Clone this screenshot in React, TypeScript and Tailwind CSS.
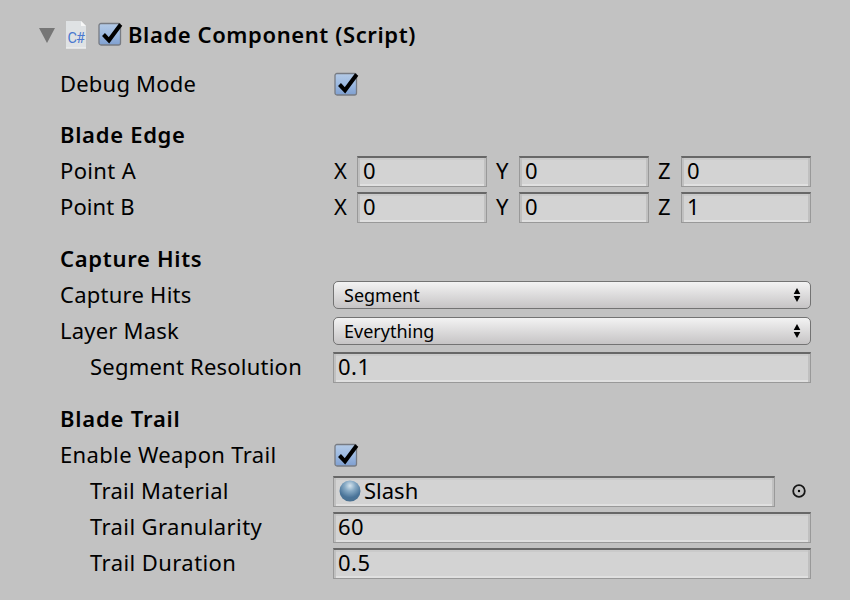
import type { ReactNode } from "react";

function Field({ children, className = "" }: { children?: ReactNode; className?: string }) {
  return (
    <div
      className={`flex h-[31px] items-center border border-t-2 border-[#999] border-t-[#676767] bg-[#d3d3d3] text-[22px] leading-[30px] shadow-[inset_2px_0_0_#c0c0c0,inset_-2px_0_0_#c0c0c0,inset_0_2px_0_#cacaca,inset_0_-2px_0_#e0e0e0] ${className}`}
    >
      {children}
    </div>
  );
}

function Check() {
  return (
    <svg width="26" height="25" viewBox="0 0 26 25" className="shrink-0">
      <defs>
        <linearGradient id="box" x1="0" y1="0" x2="0" y2="1">
          <stop offset="0" stopColor="#b4cae6" />
          <stop offset="0.5" stopColor="#9dbae1" />
          <stop offset="1" stopColor="#7f9fd0" />
        </linearGradient>
      </defs>
      <rect x="1" y="1.5" width="21.5" height="21.5" rx="2" fill="url(#box)" stroke="#777b83" strokeWidth="1.3" />
      <path d="M5.5 12.5L11 18.3L22.7 2.5" fill="none" stroke="#000" strokeWidth="4" />
    </svg>
  );
}

function Row({ label, spacing, indent, children }: { label: string; spacing: string; indent?: boolean; children: ReactNode }) {
  return (
    <div className="flex h-9 items-center">
      <div className={`h-9 w-[273px] shrink-0 text-[22px] leading-[34px] whitespace-nowrap ${indent ? "pl-[30px]" : ""} ${spacing}`}>
        {label}
      </div>
      {children}
    </div>
  );
}

function Heading({ children, spacing }: { children: string; spacing: string }) {
  return <h2 className={`h-9 text-[22px] leading-[34px] font-semibold ${spacing}`}>{children}</h2>;
}

function Popup({ children }: { children: string }) {
  return (
    <div className="flex h-7 w-[478px] items-center justify-between rounded-[5px] border-[1.5px] border-[#737373] bg-linear-to-b from-[#f3f3f3] to-[#c6c4c5] pr-[9px] pl-[10px]">
      <span className="text-[18px] leading-6">{children}</span>
      <svg width="8" height="14" viewBox="0 0 8 14">
        <path d="M4 0L7.3 6H0.7ZM0.7 8H7.3L4 14Z" fill="#000" />
      </svg>
    </div>
  );
}

function Vector({ values }: { values: string[] }) {
  return (
    <div className="flex gap-2">
      {["X", "Y", "Z"].map((axis, i) => (
        <div key={axis} className="flex items-center">
          <span className="h-[31px] w-[24px] pl-px text-[22px] leading-[29px]">{axis}</span>
          <Field className="w-[130px] pl-[5px]"><span className="-mt-[3px]">{values[i]}</span></Field>
        </div>
      ))}
    </div>
  );
}

function Value({ children }: { children: string }) {
  return <Field className="w-[478px] pl-1"><span className="-mt-[3px] tracking-[0.5px]">{children}</span></Field>;
}

export default function App() {
  return (
    <div className="h-[600px] w-[850px] overflow-hidden bg-[#c2c2c2] font-['Noto_Sans',sans-serif] text-black">
      <header className="flex h-[66px] items-start pt-[17px] pl-[39px]">
        <svg width="16" height="36" viewBox="0 0 16 36" className="shrink-0">
          <path d="M0 11H16L8 26Z" fill="#767676" />
        </svg>
        <svg width="21" height="36" viewBox="0 0 21 36" className="ml-[11px] shrink-0">
          <path d="M0 4H15L20 9V31.5H0Z" fill="#dfe2e4" />
          <path d="M15 4V9H20Z" fill="#f7f7f7" />
          <path d="M0 31H20" stroke="#f4f4f4" />
          <text x="1.5" y="26" fontSize="14.5" fill="#4a78cf" textLength="17.5" fontFamily="Roboto, sans-serif">C#</text>
        </svg>
        <div className="ml-[11px] pt-[5px]"><Check /></div>
        <h1 className="ml-[4px] text-[22px] leading-[34px] font-semibold tracking-[0.6px] whitespace-nowrap">Blade Component (Script)</h1>
      </header>
      <main className="pl-[60px]">
        <Row label="Debug Mode" spacing="tracking-[0.2px]"><div className="pl-[1px]"><Check /></div></Row>
        <section className="pt-[15px]">
          <Heading spacing="tracking-[0.7px]">Blade Edge</Heading>
          <Row label="Point A" spacing="tracking-[0.35px]"><Vector values={["0", "0", "0"]} /></Row>
          <Row label="Point B" spacing="tracking-[0.1px]"><Vector values={["0", "0", "1"]} /></Row>
        </section>
        <section className="pt-4">
          <Heading spacing="tracking-[0.7px]">Capture Hits</Heading>
          <Row label="Capture Hits" spacing="tracking-[0.25px]"><Popup>Segment</Popup></Row>
          <Row label="Layer Mask" spacing="tracking-[0.2px]"><Popup>Everything</Popup></Row>
          <Row label="Segment Resolution" indent spacing="tracking-[0.22px]"><Value>0.1</Value></Row>
        </section>
        <section className="pt-4">
          <Heading spacing="tracking-[0.8px]">Blade Trail</Heading>
          <Row label="Enable Weapon Trail" spacing="tracking-[0.35px]"><div className="pl-[1px]"><Check /></div></Row>
          <Row label="Trail Material" indent spacing="tracking-[0.3px]">
            <Field className="w-[442px] pl-[5px]">
              <svg width="22" height="22" viewBox="0 0 22 22" className="mr-[3px] -mt-px">
                <defs>
                  <radialGradient id="orb" cx="0.5" cy="0.25" r="0.75">
                    <stop offset="0" stopColor="#d5e4ee" />
                    <stop offset="0.35" stopColor="#86a9c4" />
                    <stop offset="0.75" stopColor="#4a7499" />
                    <stop offset="1" stopColor="#4a7090" />
                  </radialGradient>
                </defs>
                <circle cx="11" cy="11" r="10.5" fill="url(#orb)" />
              </svg>
              <span className="-mt-[3px]">Slash</span>
            </Field>
            <svg width="14" height="14" viewBox="0 0 14 14" className="ml-[17px]">
              <circle cx="7" cy="7" r="5.8" fill="none" stroke="#161616" strokeWidth="1.8" />
              <circle cx="7" cy="7" r="1.2" />
            </svg>
          </Row>
          <Row label="Trail Granularity" indent spacing="tracking-[0.4px]"><Value>60</Value></Row>
          <Row label="Trail Duration" indent spacing="tracking-[0.43px]"><Value>0.5</Value></Row>
        </section>
      </main>
    </div>
  );
}
